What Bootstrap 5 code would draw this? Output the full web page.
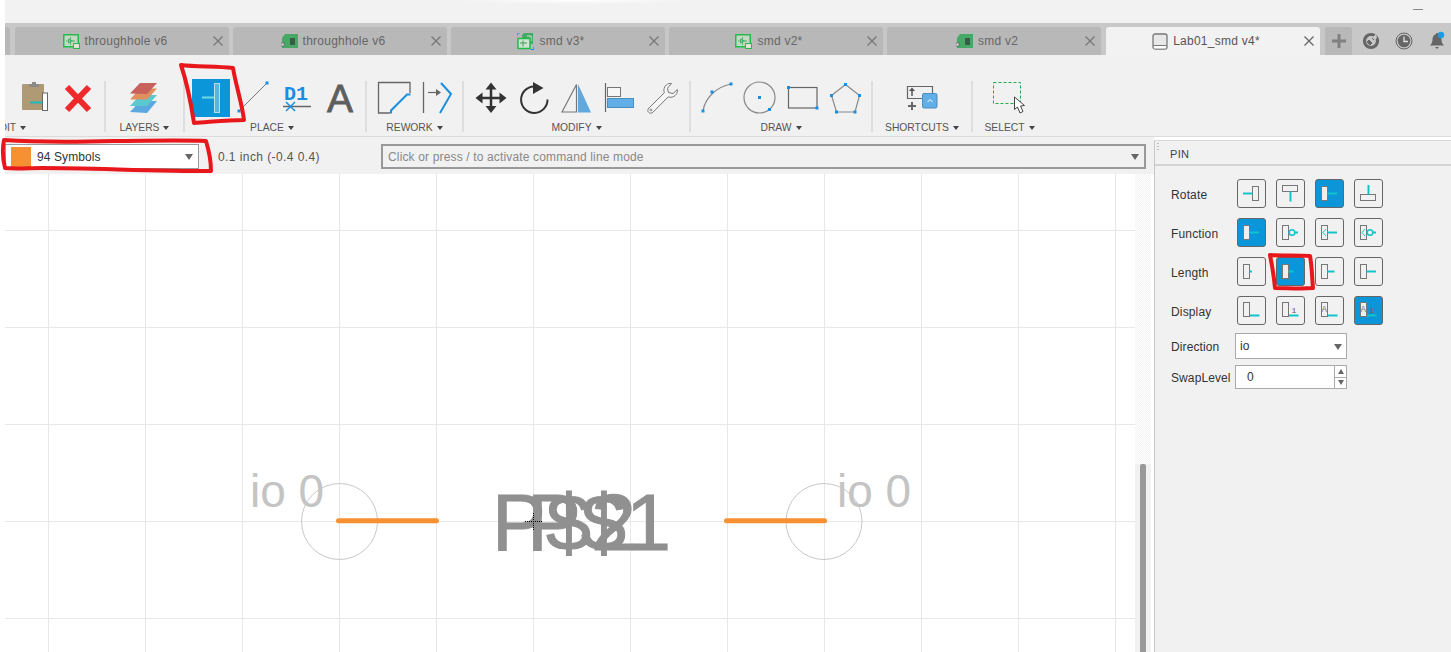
<!DOCTYPE html>
<html lang="en">
<head>
    <meta charset="UTF-8">
    <meta name="viewport" content="width=device-width, initial-scale=1.0">
    <title>Lab01_smd v4*</title>
    <link href="https://cdn.jsdelivr.net/npm/bootstrap@5.3.0/dist/css/bootstrap.min.css" rel="stylesheet">
    <style>
    html, body { height: 652px; overflow: hidden; background: #fff; }
    body { font-family: "Liberation Sans", Arial, sans-serif; font-size: 12px; color: #444; }
    .app-frame { position: relative; height: 652px; padding-left: 5px; }
    .title-strip { height: 23px; background: radial-gradient(ellipse 120px 4px at 570px 0, #fff, #f2f2f2); }
    .min-dash { width: 10px; height: 1px; background: #888; margin: 9px 28px 0 0; }
    .tab-strip { height: 32px; background: #c8c8c8; padding-top: 4px; }
    .doc-tab { width: 214px; height: 28px; margin-right: 4px; background: #b8b8b8; border-radius: 3px 3px 0 0; color: #666; letter-spacing: .25px; }
    .doc-tab.is-open { background: #f2f2f2; color: #555; margin-left: 1px; }
    .tab-stub { width: 5px; height: 28px; margin-right: 5px; background: #b8b8b8; border-radius: 0 3px 0 0; }
    .tab-name { gap: 5px; }
    .tab-x { width: 14px; margin: 0 4px 0 -4px; }
    .add-tab { width: 27px; height: 28px; margin-left: 1px; background: #b8b8b8; border-radius: 3px 3px 0 0; }
    .tray-icons { gap: 13px; margin-left: 9px; margin-top: -1px; }
    .tool-strip { height: 82px; background: #f1f1f1; border-bottom: 1px solid #dcdcdc; padding-top: 21px; }
    .tool-group { border-right: 2px solid #dedede; height: 51px; margin-top: 5px; }
    .tool-group.no-rule { border-right: 0; }
    .tool-group svg { display: block; margin-top: -5px; overflow: visible; }
    .grp-edit { width: 101px; }
    .grp-layers { width: 79px; }
    .grp-place { width: 182px; }
    .grp-rework { width: 97px; }
    .grp-modify { width: 227px; }
    .grp-draw { width: 182px; }
    .grp-shortcuts { width: 100px; }
    .grp-select { width: 77px; }
    .tool-name { font-size: 10.3px; color: #555; height: 14px; line-height: 14px; margin-top: 5px; gap: 4px; white-space: nowrap; }
    .grp-edit .tool-name { overflow: hidden; }
    .grp-edit .tool-name span { margin-left: -6px; }
    .grp-place .tool-name { padding-right: 6px; }
    .grp-select .tool-name { padding-right: 4px; }
    .caret-down { width: 0; height: 0; border: 3.5px solid transparent; border-top: 4px solid #444; border-bottom: 0; }
    .work-area { height: 515px; }
    .work-main { width: 1149px; }
    .cmd-row { height: 37px; background: #f1f1f1; padding-top: 7px; }
    .layer-pick { width: 194px; height: 25px; border: 1px solid #999; background: #fff; color: #333; padding-left: 5px; letter-spacing: .1px; }
    .layer-swatch { width: 20px; height: 20px; background: #f79030; margin-right: 6px; }
    .coord-text { width: 182px; height: 25px; padding-left: 19px; color: #555; letter-spacing: .42px; }
    .cmd-input { width: 765px; height: 25px; border: 2px solid #999; background: #f1f1f1; color: #888; padding: 0 5px; letter-spacing: .15px; }
    .caret-grey { width: 0; height: 0; border: 4px solid transparent; border-top: 6px solid #666; border-bottom: 0; }
    .layer-pick .caret-grey { margin-right: 5px; }
    .canvas-row { height: 478px; }
    .pcb-canvas { width: 1130px; height: 478px; background: #fff; display: block; }
    .scroll-lane { width: 16px; background: #f1f1f1; }
    .scroll-dither { height: 290px; background: repeating-conic-gradient(#fff 0 25%, #f2f2f2 0 50%) 0 0 / 2px 2px; }
    .scroll-thumb { width: 6px; height: 188px; margin-left: 5px; background: #999; border-radius: 2px 2px 0 0; }
    .pin-panel { width: 297px; margin-top: 3px; background: #f1f1f1; border-left: 1px solid #c8c8c8; border-top: 1px solid #d8d8d8; }
    .pin-head { height: 25px; padding: 4px 0 0 15px; border-bottom: 2px solid #d4d4d4; color: #444; font-size: 11px; letter-spacing: .3px; position: relative; }
    .grip-dots { position: absolute; left: 2px; top: 2px; width: 2px; height: 7px; background: repeating-linear-gradient(#bbb 0 1px, transparent 1px 3px); }
    .pin-body { padding: 13px 0 0 16px; }
    .pin-row { height: 29px; margin-bottom: 10px; }
    .pin-label { width: 66px; padding-top: 2px; color: #333; letter-spacing: .15px; }
    .pin-btn { width: 29px; height: 29px; padding: 0; margin-right: 10px; border: 1px solid #666; border-radius: 3px; background: #f1f1f1; }
    .pin-btn.is-on { background: #0a96d8; }
    .pin-btn svg { display: block; }
    .field-row { margin-bottom: 6px; }
    .pin-row + .field-row { margin-top: -2px; }
    .field-row .pin-label { width: 64px; padding-top: 2px; letter-spacing: .1px; }
    .dir-select { width: 112px; height: 26px; padding: 0 0 0 4px; font-size: 12px; line-height: 1; border: 1px solid #aaa; border-radius: 0; color: #333; background-color: #fff; background-image: none; }
    .field-wrap { position: relative; }
    .field-wrap .caret-grey { position: absolute; right: 5px; top: 11px; }
    .swap-box { width: 112px; height: 24px; border: 1px solid #aaa; background: #fff; }
    .swap-value { width: 98px; height: 22px; padding: 0 0 0 11px; border: 0; border-radius: 0; font-size: 12px; color: #333; }
    .swap-spin { width: 13px; border-left: 1px solid #aaa; }
    .swap-spin span { flex: 1; }
    .swap-spin span + span { border-top: 1px solid #aaa; }
    .spin-up { width: 0; height: 0; border: 3.5px solid transparent; border-bottom: 5px solid #666; border-top: 0; }
    .spin-down { width: 0; height: 0; border: 3.5px solid transparent; border-top: 5px solid #666; border-bottom: 0; }
    .ink-layer { position: absolute; left: 0; top: 0; pointer-events: none; }
    .tool-dot { fill: #1890e8; }
    </style>
</head>
<body>
    <svg width="0" height="0" class="d-block position-absolute">
        <symbol id="ic-schem" viewBox="0 0 17 15">
            <rect x=".75" y=".75" width="14.5" height="12" fill="#c4d8c4" stroke="#22bb4c" stroke-width="1.5"/>
            <path d="M3 7h9M7.500 3v8M5.500 5l4 2-4 2z" fill="none" stroke="#4fb36c"/>
            <rect x="10.500" y="9.500" width="6" height="5" fill="#d8e8d8" stroke="#22bb4c"/>
        </symbol>
        <symbol id="ic-board" viewBox="0 0 17 15">
            <path d="M4 0H17V14H1V4z" fill="#48a868"/>
            <rect x="9" y="4" width="5" height="7" fill="#333" opacity=".65"/>
            <rect x="0" y="9" width="3" height="3" fill="#ddd" stroke="#555" stroke-width=".6"/>
        </symbol>
        <symbol id="ic-hybrid" viewBox="0 0 17 17">
            <path d="M7 0H16V11H5V2z" fill="#48a868"/>
            <path d="M10 3h4v5" fill="none" stroke="#cfe5d5"/>
            <rect x="1" y="5.500" width="12" height="10" fill="#d0e2d0" stroke="#22bb4c" stroke-width="1.500"/>
            <path d="M3 10h7M6 7.500v6" stroke="#3f9f5f" fill="none"/>
            <path d="M0 3V0h3M14 16.500h3V14" fill="none" stroke="#1a8fe0" stroke-width="1.200"/>
        </symbol>
    </svg>

    <div class="app-frame">
        <div class="title-strip d-flex justify-content-end">
            <div class="min-dash"></div>
        </div>

        <div class="tab-strip d-flex">
            <div class="tab-stub"></div>
            <div class="doc-tab d-flex align-items-center">
                <div class="tab-name flex-grow-1 d-flex align-items-center justify-content-center"><svg width="17" height="15"><use href="#ic-schem"/></svg><span>throughhole v6</span></div>
                <svg class="tab-x" width="14" height="12" viewBox="0 0 14 12"><path d="M2.500 1.500l9 9m0-9l-9 9" stroke="#777" stroke-width="1.300"/></svg>
            </div>
            <div class="doc-tab d-flex align-items-center">
                <div class="tab-name flex-grow-1 d-flex align-items-center justify-content-center"><svg width="17" height="15"><use href="#ic-board"/></svg><span>throughhole v6</span></div>
                <svg class="tab-x" width="14" height="12" viewBox="0 0 14 12"><path d="M2.500 1.500l9 9m0-9l-9 9" stroke="#777" stroke-width="1.300"/></svg>
            </div>
            <div class="doc-tab d-flex align-items-center">
                <div class="tab-name flex-grow-1 d-flex align-items-center justify-content-center"><svg width="17" height="17"><use href="#ic-hybrid"/></svg><span>smd v3*</span></div>
                <svg class="tab-x" width="14" height="12" viewBox="0 0 14 12"><path d="M2.500 1.500l9 9m0-9l-9 9" stroke="#777" stroke-width="1.300"/></svg>
            </div>
            <div class="doc-tab d-flex align-items-center">
                <div class="tab-name flex-grow-1 d-flex align-items-center justify-content-center"><svg width="17" height="15"><use href="#ic-schem"/></svg><span>smd v2*</span></div>
                <svg class="tab-x" width="14" height="12" viewBox="0 0 14 12"><path d="M2.500 1.500l9 9m0-9l-9 9" stroke="#777" stroke-width="1.300"/></svg>
            </div>
            <div class="doc-tab d-flex align-items-center">
                <div class="tab-name flex-grow-1 d-flex align-items-center justify-content-center"><svg width="17" height="15"><use href="#ic-board"/></svg><span>smd v2</span></div>
                <svg class="tab-x" width="14" height="12" viewBox="0 0 14 12"><path d="M2.500 1.500l9 9m0-9l-9 9" stroke="#777" stroke-width="1.300"/></svg>
            </div>
            <div class="doc-tab is-open d-flex align-items-center">
                <div class="tab-name flex-grow-1 d-flex align-items-center justify-content-center">
                    <svg width="16" height="17" viewBox="0 0 16 17"><rect x="1" y="1" width="14" height="15" rx="2" fill="#e8e8e8" stroke="#777" stroke-width="1.300"/><path d="M1.500 12.500h13" stroke="#777"/><rect x="2" y="13" width="12" height="2.500" fill="#fff"/></svg>
                    <span>Lab01_smd v4*</span>
                </div>
                <svg class="tab-x" width="14" height="12" viewBox="0 0 14 12"><path d="M2.500 1.500l9 9m0-9l-9 9" stroke="#666" stroke-width="1.300"/></svg>
            </div>
            <div class="add-tab d-flex align-items-center justify-content-center">
                <svg width="14" height="14" viewBox="0 0 14 14"><path d="M7 0v14M0 7h14" stroke="#808080" stroke-width="3"/></svg>
            </div>
            <div class="tray-icons d-flex align-items-center">
                <svg width="20" height="20" viewBox="0 0 20 20"><circle cx="10" cy="10" r="6.500" fill="none" stroke="#666" stroke-width="3.200"/><path d="M15 3l-5 5-3 1 3 5 1-3 5-4z" fill="#c8c8c8"/><path d="M8 9l3 3-2 2-3-3zM11 7l2 2" fill="#666" stroke="#666"/></svg>
                <svg width="20" height="20" viewBox="0 0 20 20"><circle cx="10" cy="10" r="8" fill="none" stroke="#666" stroke-width="1"/><circle cx="10" cy="10" r="6.300" fill="#666"/><path d="M10 5.500V10.500h4" fill="none" stroke="#e4e4e4" stroke-width="1.300"/></svg>
                <svg width="20" height="20" viewBox="0 0 20 20"><path d="M10 2c-.8 0-1.200.6-1.200 1.300C6.500 4 5.500 6 5.500 8.500c0 3-1 4.500-2.500 6h14c-1.500-1.500-2.500-3-2.500-6 0-2.500-1-4.500-3.300-5.200 0-.7-.4-1.300-1.200-1.300z" fill="#666"/><path d="M8 16h4l-2 2z" fill="#666"/><circle cx="14" cy="4" r="3.200" fill="#1a9be8"/></svg>
            </div>
        </div>

        <div class="tool-strip d-flex">
            <div class="tool-group grp-edit">
                <svg width="99" height="40" viewBox="5 76 99 40">
                    <rect x="22" y="84" width="22" height="26" rx="1" fill="#b09a76"/>
                    <path d="M29 87v-3h3v-2h4v2h3v3z" fill="#8a8a8a"/>
                    <rect x="42.500" y="93" width="5" height="17.500" fill="#fff" stroke="#666"/>
                    <path d="M30 102.500h12.500" stroke="#1fb8b8" stroke-width="2"/>
                    <path d="M67 87l22 23m0-23l-22 23" stroke="#f0292c" stroke-width="6"/>
                </svg>
                <div class="tool-name d-flex align-items-center"><span>OIT</span><i class="caret-down"></i></div>
            </div>
            <div class="tool-group grp-layers">
                <svg width="77" height="40" viewBox="106 76 77 40">
                    <path d="M130 112l10-11h17l-10 12z" fill="#5ca8e0"/>
                    <path d="M130 106l10-11h17l-10 11z" fill="#5cc8d0"/>
                    <path d="M130 99.500l10-11h17l-10 11z" fill="#e0905c"/>
                    <path d="M130 93.500l10-10.500h17l-10 11z" fill="#c8605c"/>
                </svg>
                <div class="tool-name d-flex align-items-center justify-content-center"><span>LAYERS</span><i class="caret-down"></i></div>
            </div>
            <div class="tool-group grp-place">
                <svg width="180" height="40" viewBox="185 76 180 40">
                    <rect x="192" y="79" width="38" height="38" fill="#0a96d8"/>
                    <rect x="214.500" y="83.500" width="5" height="29" fill="#55b8e0" stroke="#bcdcea"/>
                    <path d="M202 97.500h12" stroke="#70dbe8" stroke-width="2"/>
                    <path d="M239 111l28-28" stroke="#777"/>
                    <rect class="tool-dot" x="237.500" y="109.500" width="3" height="3"/>
                    <rect class="tool-dot" x="265.500" y="81.500" width="3" height="3"/>
                    <text x="284" y="100" font-family="Liberation Mono, monospace" font-weight="700" font-size="20" fill="#1a8fe0">D1</text>
                    <path d="M283 106.500h28" stroke="#666" stroke-width="1.500"/>
                    <path d="M286 102l9 9m0-9l-9 9" stroke="#1a8fe0" stroke-width="1.500"/>
                    <text x="327" y="112" font-family="Liberation Sans, sans-serif" font-size="39" fill="#5e5e5e" stroke="#5e5e5e" stroke-width=".8">A</text>
                </svg>
                <div class="tool-name d-flex align-items-center justify-content-center"><span>PLACE</span><i class="caret-down"></i></div>
            </div>
            <div class="tool-group grp-rework">
                <svg width="95" height="40" viewBox="367 76 95 40">
                    <path d="M390 113h-11.500V82.500H410V93" fill="none" stroke="#666" stroke-width="1.300"/>
                    <path d="M391 113.500v-3l16-16h3.500" fill="none" stroke="#1a8fe0" stroke-width="2"/>
                    <path d="M423.500 82v31" stroke="#666" stroke-width="1.300"/>
                    <path d="M428 92.500h12" stroke="#666" stroke-width="1.200"/>
                    <path d="M436 89l5 3.500-5 3.500z" fill="#666"/>
                    <path d="M441 83l10 11-11 19" fill="none" stroke="#1a8fe0" stroke-width="2"/>
                </svg>
                <div class="tool-name d-flex align-items-center justify-content-center"><span>REWORK</span><i class="caret-down"></i></div>
            </div>
            <div class="tool-group grp-modify">
                <svg width="225" height="40" viewBox="464 76 225 40">
                    <path d="M481 98h20M491 88v20" stroke="#333" stroke-width="2.500"/>
                    <path d="M491 82.500l5.500 7h-11zM491 113l5.500-7h-11zM475.500 98l7-5.500v11zM506.500 98l-7-5.500v11z" fill="#333"/>
                    <path d="M534 86.500a13.200 13.200 0 1 0 13.500 13" fill="none" stroke="#333" stroke-width="2"/>
                    <path d="M533 82l10.500 6-10.500 6z" fill="#333"/>
                    <path d="M562 112l14.500-27.500V112z" fill="none" stroke="#777" stroke-width="1.200"/>
                    <path d="M578 84l13 28.500h-13z" fill="#5fa8e0"/>
                    <path d="M605.500 83v29" stroke="#666" stroke-width="1.200"/>
                    <rect x="607.500" y="87.500" width="13" height="9" fill="#f6f6f6" stroke="#777"/>
                    <rect x="607.500" y="98.500" width="26" height="9" fill="#62aee6" stroke="#4a8fbf"/>
                    <path d="M671.500 83.500c-3.800-.6-7.400 2.400-7.600 6.300-.1 1.100.1 2 .5 2.900L649 108c-1.500 1.500-1.500 3.400-.3 4.400 1.200 1.200 3 1 4.300-.2l15.300-15.400c1 .4 2 .6 3 .4 3.800-.4 6.600-3.800 6-7.600l-4.300 4-4.500-1-1-4.400z" fill="#f6f6f6" stroke="#777"/>
                    <circle cx="651" cy="110" r="1" fill="none" stroke="#777" stroke-width=".8"/>
                </svg>
                <div class="tool-name d-flex align-items-center justify-content-center"><span>MODIFY</span><i class="caret-down"></i></div>
            </div>
            <div class="tool-group grp-draw">
                <svg width="180" height="40" viewBox="691 76 180 40">
                    <path d="M703 111C705 98 716 87 731 84" fill="none" stroke="#888" stroke-width="1.200"/>
                    <rect class="tool-dot" x="701.500" y="109.500" width="3" height="3"/>
                    <rect class="tool-dot" x="710.500" y="90.500" width="3" height="3"/>
                    <rect class="tool-dot" x="729.500" y="82.500" width="3" height="3"/>
                    <circle cx="759.500" cy="97.500" r="15.500" fill="none" stroke="#888" stroke-width="1.200"/>
                    <rect class="tool-dot" x="758" y="96" width="3" height="3"/>
                    <rect class="tool-dot" x="768" y="108" width="3" height="3"/>
                    <rect x="788.500" y="87.500" width="28.500" height="20.500" fill="none" stroke="#666" stroke-width="1.200"/>
                    <rect class="tool-dot" x="787" y="86" width="3" height="3"/>
                    <rect class="tool-dot" x="815.500" y="106.500" width="3" height="3"/>
                    <path d="M845.500 84.500l14 11-4.500 16.500h-18.500l-5-16.500z" fill="none" stroke="#888" stroke-width="1.200"/>
                    <rect class="tool-dot" x="844" y="83" width="3" height="3"/>
                    <rect class="tool-dot" x="858" y="94" width="3" height="3"/>
                    <rect class="tool-dot" x="853.500" y="110.500" width="3" height="3"/>
                    <rect class="tool-dot" x="835" y="110.500" width="3" height="3"/>
                    <rect class="tool-dot" x="830" y="94" width="3" height="3"/>
                </svg>
                <div class="tool-name d-flex align-items-center justify-content-center"><span>DRAW</span><i class="caret-down"></i></div>
            </div>
            <div class="tool-group grp-shortcuts">
                <svg width="98" height="40" viewBox="873 76 98 40">
                    <path d="M922 98.500h-14.500v-12H932.500V93" fill="none" stroke="#666" stroke-width="1.200"/>
                    <path d="M912 96v-7" stroke="#555" stroke-width="1.500"/>
                    <path d="M912 87.500l3 3.500h-6z" fill="#555"/>
                    <path d="M912 102v8M908 106h8" stroke="#666" stroke-width="2"/>
                    <rect x="922.500" y="93.500" width="14.500" height="14.500" rx="1.500" fill="#62aee6" stroke="#4a8fbf"/>
                    <path d="M927.500 102l2.500-2.500 2.500 2.500" fill="none" stroke="#fff"/>
                </svg>
                <div class="tool-name d-flex align-items-center justify-content-center"><span>SHORTCUTS</span><i class="caret-down"></i></div>
            </div>
            <div class="tool-group no-rule grp-select">
                <svg width="77" height="40" viewBox="973 76 77 40">
                    <rect x="993.500" y="82.500" width="27" height="21" fill="none" stroke="#22aa4c" stroke-dasharray="3 2"/>
                    <path d="M1014.500 97v12.500l3-2.500 2.500 6 3-1.500-2.500-5.500 4-.5z" fill="#fff" stroke="#444"/>
                </svg>
                <div class="tool-name d-flex align-items-center justify-content-center"><span>SELECT</span><i class="caret-down"></i></div>
            </div>
        </div>

        <div class="work-area d-flex">
            <div class="work-main">
                <div class="cmd-row d-flex">
                    <div class="layer-pick d-flex align-items-center">
                        <span class="layer-swatch"></span>
                        <span class="flex-grow-1">94 Symbols</span>
                        <i class="caret-grey"></i>
                    </div>
                    <div class="coord-text d-flex align-items-center">0.1 inch (-0.4 0.4)</div>
                    <div class="cmd-input d-flex align-items-center justify-content-between">
                        <span>Click or press / to activate command line mode</span>
                        <i class="caret-grey"></i>
                    </div>
                </div>
                <div class="canvas-row d-flex">
                    <svg class="pcb-canvas" viewBox="5 174 1130 478">
                        <path d="M48.500 174V652M145.500 174V652M242.500 174V652M339.500 174V652M436.500 174V652M533.500 174V652M630.500 174V652M727.500 174V652M824.500 174V652M921.500 174V652M1018.500 174V652M1115.500 174V652M5 230.500H1135M5 327.500H1135M5 424.500H1135M5 521.500H1135M5 618.500H1135" stroke="#e8e8e8" fill="none"/>
                        <circle cx="339.500" cy="521.500" r="38" fill="none" stroke="#c8c8c8"/>
                        <circle cx="824" cy="521.500" r="38" fill="none" stroke="#c8c8c8"/>
                        <path d="M338.500 520.800H436.500M726.500 520.800H824.500" stroke="#f79030" stroke-width="5" stroke-linecap="round"/>
                        <text x="250" y="507" font-family="Liberation Sans, sans-serif" font-size="46" fill="#c4c4c4">io 0</text>
                        <text x="837" y="507" font-family="Liberation Sans, sans-serif" font-size="46" fill="#c4c4c4">io 0</text>
                        <text x="492" y="550" font-family="Liberation Sans, sans-serif" font-size="79" fill="#909090" stroke="#909090" textLength="144" lengthAdjust="spacingAndGlyphs">P$2</text>
                        <text x="527" y="550" font-family="Liberation Sans, sans-serif" font-size="79" fill="#909090" stroke="#909090" textLength="144" lengthAdjust="spacingAndGlyphs">P$1</text>
                        <path d="M525 521.500h17M533.500 513v17" stroke="#000" stroke-dasharray="1 1"/>
                    </svg>
                    <div class="scroll-lane">
                        <div class="scroll-dither"></div>
                        <div class="scroll-thumb"></div>
                    </div>
                </div>
            </div>

            <aside class="pin-panel">
                <div class="pin-head d-flex align-items-center"><span class="grip-dots"></span>PIN</div>
                <div class="pin-body">
                    <div class="pin-row d-flex align-items-center">
                        <span class="pin-label">Rotate</span>
                        <button type="button" class="pin-btn"><svg width="27" height="27" viewBox="1 1 27 27"><rect x="15.500" y="7.500" width="6" height="14" fill="none" stroke="#777"/><path d="M6 14.500h9.500" stroke="#10c4cc" stroke-width="2"/></svg></button>
                        <button type="button" class="pin-btn"><svg width="27" height="27" viewBox="1 1 27 27"><rect x="6.500" y="6.500" width="15" height="6" fill="none" stroke="#777"/><path d="M14.500 12.500v10" stroke="#10c4cc" stroke-width="2"/></svg></button>
                        <button type="button" class="pin-btn is-on"><svg width="27" height="27" viewBox="1 1 27 27"><rect x="6.500" y="7.500" width="6" height="14" fill="#eee" stroke="#777"/><path d="M12.500 14.500h9.500" stroke="#10c4cc" stroke-width="2"/></svg></button>
                        <button type="button" class="pin-btn"><svg width="27" height="27" viewBox="1 1 27 27"><rect x="6.500" y="15.500" width="15" height="6" fill="none" stroke="#777"/><path d="M14.500 6v9.500" stroke="#10c4cc" stroke-width="2"/></svg></button>
                    </div>
                    <div class="pin-row d-flex align-items-center">
                        <span class="pin-label">Function</span>
                        <button type="button" class="pin-btn is-on"><svg width="27" height="27" viewBox="1 1 27 27"><rect x="6.500" y="7.500" width="6" height="14" fill="#eee" stroke="#777"/><path d="M12.500 14.500h9.500" stroke="#10c4cc" stroke-width="2"/></svg></button>
                        <button type="button" class="pin-btn"><svg width="27" height="27" viewBox="1 1 27 27"><rect x="6.500" y="7.500" width="6" height="14" fill="none" stroke="#777"/><circle cx="16" cy="14.500" r="2.800" fill="none" stroke="#10c4cc" stroke-width="1.500"/><path d="M19 14.500h3" stroke="#10c4cc" stroke-width="2"/></svg></button>
                        <button type="button" class="pin-btn"><svg width="27" height="27" viewBox="1 1 27 27"><rect x="6.500" y="7.500" width="6" height="14" fill="none" stroke="#777"/><path d="M11 11l-3 3.500 3 3.500" fill="none" stroke="#10c4cc"/><path d="M12.500 14.500h9.500" stroke="#10c4cc" stroke-width="2"/></svg></button>
                        <button type="button" class="pin-btn"><svg width="27" height="27" viewBox="1 1 27 27"><rect x="6.500" y="7.500" width="6" height="14" fill="none" stroke="#777"/><path d="M11 11l-3 3.500 3 3.500" fill="none" stroke="#10c4cc"/><circle cx="16" cy="14.500" r="2.800" fill="none" stroke="#10c4cc" stroke-width="1.500"/><path d="M19 14.500h3" stroke="#10c4cc" stroke-width="2"/></svg></button>
                    </div>
                    <div class="pin-row d-flex align-items-center">
                        <span class="pin-label">Length</span>
                        <button type="button" class="pin-btn"><svg width="27" height="27" viewBox="1 1 27 27"><rect x="6.500" y="7.500" width="6" height="14" fill="none" stroke="#777"/><path d="M12.500 14.500h2.500" stroke="#10c4cc" stroke-width="2"/></svg></button>
                        <button type="button" class="pin-btn is-on"><svg width="27" height="27" viewBox="1 1 27 27"><rect x="6.500" y="7.500" width="6" height="14" fill="#eee" stroke="#777"/><path d="M12.500 14.500h5" stroke="#10c4cc" stroke-width="2"/></svg></button>
                        <button type="button" class="pin-btn"><svg width="27" height="27" viewBox="1 1 27 27"><rect x="6.500" y="7.500" width="6" height="14" fill="none" stroke="#777"/><path d="M12.500 14.500h7" stroke="#10c4cc" stroke-width="2"/></svg></button>
                        <button type="button" class="pin-btn"><svg width="27" height="27" viewBox="1 1 27 27"><rect x="6.500" y="7.500" width="6" height="14" fill="none" stroke="#777"/><path d="M12.500 14.500h9.500" stroke="#10c4cc" stroke-width="2"/></svg></button>
                    </div>
                    <div class="pin-row d-flex align-items-center">
                        <span class="pin-label">Display</span>
                        <button type="button" class="pin-btn"><svg width="27" height="27" viewBox="1 1 27 27"><rect x="6.500" y="6.500" width="6" height="14" fill="none" stroke="#777"/><path d="M13 19.500h9.500" stroke="#10c4cc" stroke-width="2"/></svg></button>
                        <button type="button" class="pin-btn"><svg width="27" height="27" viewBox="1 1 27 27"><rect x="6.500" y="6.500" width="6" height="14" fill="none" stroke="#777"/><path d="M13 19.500h9.500" stroke="#10c4cc" stroke-width="2"/><text x="15.500" y="16.500" font-family="Liberation Mono, monospace" font-size="8" fill="#555">1</text></svg></button>
                        <button type="button" class="pin-btn"><svg width="27" height="27" viewBox="1 1 27 27"><rect x="6.500" y="6.500" width="6" height="14" fill="none" stroke="#777"/><path d="M13 19.500h9.500" stroke="#10c4cc" stroke-width="2"/><text x="6.500" y="16" font-family="Liberation Mono, monospace" font-size="9" fill="#777">A</text></svg></button>
                        <button type="button" class="pin-btn is-on"><svg width="27" height="27" viewBox="1 1 27 27"><rect x="6.500" y="6.500" width="6" height="14" fill="#eee" stroke="#777"/><path d="M13 19.500h9.500" stroke="#10c4cc" stroke-width="2"/><text x="6.500" y="16" font-family="Liberation Mono, monospace" font-size="9" fill="#777">A</text><text x="15.500" y="16.500" font-family="Liberation Mono, monospace" font-size="8" fill="#8a5a40">1</text></svg></button>
                    </div>
                    <div class="field-row d-flex align-items-center">
                        <span class="pin-label">Direction</span>
                        <div class="field-wrap">
                            <select class="form-select dir-select"><option>io</option></select>
                            <i class="caret-grey"></i>
                        </div>
                    </div>
                    <div class="field-row d-flex align-items-center">
                        <span class="pin-label">SwapLevel</span>
                        <div class="swap-box d-flex">
                            <input type="text" class="form-control swap-value" value="0">
                            <div class="swap-spin d-flex flex-column">
                                <span class="d-flex align-items-center justify-content-center"><i class="spin-up"></i></span>
                                <span class="d-flex align-items-center justify-content-center"><i class="spin-down"></i></span>
                            </div>
                        </div>
                    </div>
                </div>
            </aside>
        </div>

        <!-- red marker strokes somebody drew on the screenshot -->
        <svg class="ink-layer" width="1451" height="652" viewBox="0 0 1451 652">
            <g fill="none" stroke="#e8171c" stroke-width="4" stroke-linejoin="round" stroke-linecap="round">
                <path d="M181 65c15 2 35 1 52 3 3 18 9 35 11 52-16 0-34 2-50 3-3-20-7-40-13-58z"/>
                <path d="M4 140c30 2 70 2 110 1 30 0 60-1 92 0 3 10 5 22 5 30-60 0-120-3-170-3-12 0-24 1-36 0-2-8-3-18-1-28z"/>
                <path d="M1270 255c12 1 28 0 40 1 2 10 2 22 3 32-12 1-26 0-38 0-1-11-3-23-5-33z"/>
            </g>
        </svg>
    </div>

    <script src="https://cdn.jsdelivr.net/npm/bootstrap@5.3.0/dist/js/bootstrap.bundle.min.js"></script>
</body>
</html>
